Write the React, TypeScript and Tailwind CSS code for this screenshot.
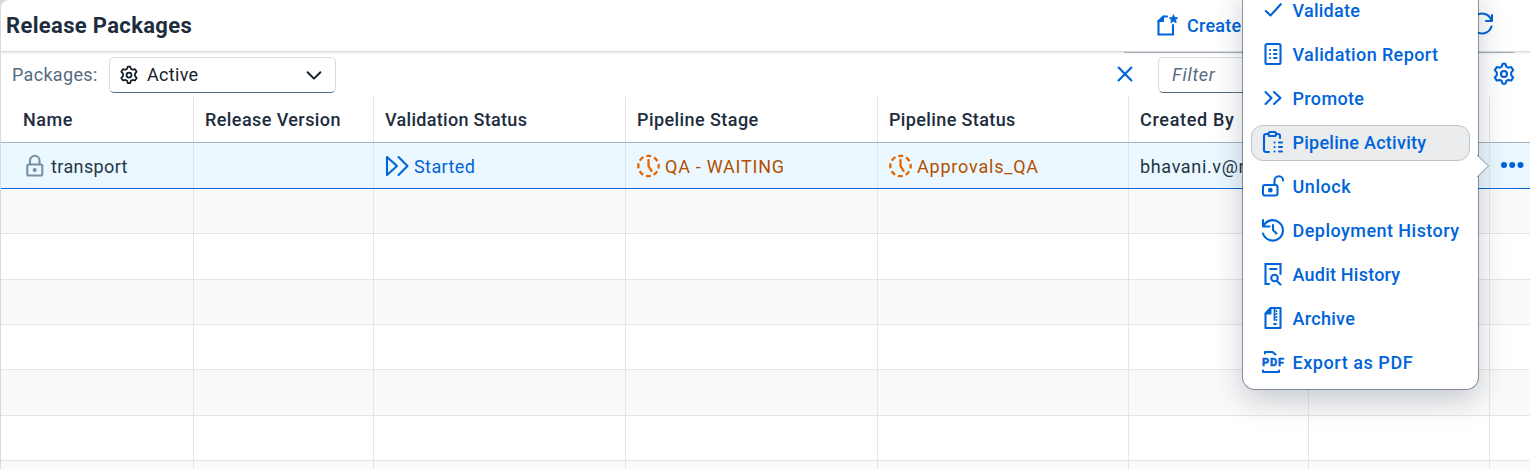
import type { ReactNode } from "react";

type IconProps = { className?: string; children?: ReactNode };

function Icon({ className = "", children }: IconProps) {
  return (
    <svg
      viewBox="0 0 24 24"
      width="24"
      height="24"
      fill="none"
      stroke="currentColor"
      strokeWidth="2.1"
      strokeLinecap="round"
      strokeLinejoin="round"
      className={`block shrink-0 ${className}`}
    >
      {children}
    </svg>
  );
}

const GEAR =
  "M10.6 1.800h2.800l.9 2.800 2 1.100 2.900-.7 2 3.100-2 2.300v2.800l2 2.300-2 3.100-2.900-.7-2 1.100-.9 2.800h-2.800l-.9-2.800-2-1.100-2.900.7-2-3.100 2-2.300v-2.800l-2-2.300 2-3.100 2.900.7 2-1.100z";

const GearIcon = ({ className = "" }: IconProps) => (
  <Icon className={className}>
    <path d={GEAR} />
    <circle cx="12" cy="12" r="3" />
  </Icon>
);

const WaitingIcon = () => (
  <Icon className="-ml-px text-[#e76500]">
    <circle
      cx="12.500"
      cy="12"
      r="10.200"
      strokeWidth="2.300"
      strokeDasharray="5 3.010"
      strokeDashoffset="2.500"
      strokeLinecap="butt"
    />
    <path d="M12.500 6v6l3 4.800" strokeWidth="2.300" />
  </Icon>
);

const menu: { label: string; tracking: string; active?: boolean; icon: ReactNode }[] = [
  {
    label: "Validate",
    tracking: "tracking-[0.25px]",
    icon: <Icon><path d="M4.800 13l4.700 4.500L19.800 6.200" /></Icon>,
  },
  {
    label: "Validation Report",
    tracking: "tracking-[0.38px]",
    icon: (
      <Icon>
        <rect x="4.500" y="2" width="15" height="20" rx="1.500" />
        <path d="M9 8h.1M9 12h.1M9 16h.1M13 8h2.500M13 12h2.500M13 16h2.500" />
      </Icon>
    ),
  },
  {
    label: "Promote",
    tracking: "tracking-[0.35px]",
    icon: <Icon><path d="M4.500 6l6 6-6 6M13 6l6.500 6-6.500 6" /></Icon>,
  },
  {
    label: "Pipeline Activity",
    tracking: "tracking-[0.26px]",
    active: true,
    icon: (
      <Icon>
        <path d="M7 4H5Q3 4 3 6v14Q3 22 5 22H8M16 4h1q2 0 2 2v2" />
        <rect x="7.500" y="2" width="7.500" height="4" rx="1.500" />
        <path d="M13.500 12.500h.1M13.500 17h.1M13.500 21.500h.1M18 12.500H21M18 17H21M18 21.500H21" />
      </Icon>
    ),
  },
  {
    label: "Unlock",
    tracking: "tracking-[0.55px]",
    icon: (
      <Icon>
        <rect x="2" y="11" width="14.500" height="10.500" rx="2" />
        <path d="M13.500 10.500V6.500a4.300 4.300 0 0 1 8.600 0" />
        <circle cx="9.300" cy="16.200" r="1.300" fill="currentColor" />
      </Icon>
    ),
  },
  {
    label: "Deployment History",
    tracking: "tracking-[0.46px]",
    icon: (
      <Icon>
        <path d="M2 2v6.500H8.500M2.500 8A10.200 10.200 0 1 1 2 15.500M12 7v5l3.500 3.500" />
      </Icon>
    ),
  },
  {
    label: "Audit History",
    tracking: "tracking-[0.22px]",
    icon: (
      <Icon>
        <path d="M8 22H4.500V2h15v10M9 7h6.500" strokeLinejoin="miter" />
        <circle cx="13.500" cy="16" r="3.300" />
        <path d="M16 19l3.500 3.500" />
      </Icon>
    ),
  },
  {
    label: "Archive",
    tracking: "tracking-[0.3px]",
    icon: (
      <Icon>
        <path d="M9.500 2h10v20H4.500V7.500z" />
        <path d="M10 2v6H4.500z" fill="currentColor" strokeWidth="1" />
        <path d="M13.500 3v11M15.500 5h.1M15.500 8h.1M15.500 11h.1M15.500 14h.1M13 18h2" strokeWidth="1.800" />
      </Icon>
    ),
  },
  {
    label: "Export as PDF",
    tracking: "tracking-[0.56px]",
    icon: (
      <Icon>
        <path d="M4 3.500V2h7.500l3 2.500M2 20.500V22h16v-1.500" />
        <text
          x="1"
          y="16.200"
          fill="currentColor"
          stroke="currentColor"
          strokeWidth="0.500"
          fontSize="11"
          fontWeight="700"
          textLength="22"
          fontFamily="Roboto, sans-serif"
        >
          PDF
        </text>
      </Icon>
    ),
  },
];

const HEADERS = [
  { label: "Name", cls: "pl-[22px] tracking-[0.5px]" },
  { label: "Release Version", cls: "pl-[11px] tracking-[0.42px]" },
  { label: "Validation Status", cls: "pl-[11px] tracking-[0.3px]" },
  { label: "Pipeline Stage", cls: "pl-[11px] tracking-[0.43px]" },
  { label: "Pipeline Status", cls: "pl-[11px] tracking-[0.38px]" },
  { label: "Created By", cls: "pl-[11px] tracking-[0.68px]" },
  { label: "", cls: "" },
  { label: "", cls: "" },
];

const COLS = "grid grid-cols-[193px_180px_252px_252px_251px_180px_181px_1fr]";
const CELL = "flex items-center overflow-hidden whitespace-nowrap border-r border-[#e5e5e5] last:border-r-0";

const EMPTY_ROWS = [
  "h-[45px] bg-[#fafafa]",
  "h-[46px] bg-white",
  "h-[45px] bg-[#fafafa]",
  "h-[45px] bg-white",
  "h-[46px] bg-[#fafafa]",
  "h-[45px] bg-white",
  "h-[45px] bg-[#fafafa]",
];

function Toolbar() {
  return (
    <header className="flex h-[52px] shrink-0 items-center border-b border-[#d9d9d9] pl-[5px] shadow-[0_1px_2px_rgba(34,53,72,0.12)]">
      <h1 className="w-[1149px] text-[22px] font-bold leading-none tracking-[0.34px] text-[#1d2d3e]">
        Release Packages
      </h1>
      <button className="-mt-px flex items-center gap-2 text-[18px] font-medium tracking-[0.25px] text-[#0064d9]">
        <Icon>
          <path d="M12 3.500H8.500L3.500 8v13.500h14.500V12" strokeLinejoin="miter" />
          <path d="M8.500 3v5.500H3z" fill="currentColor" strokeWidth="1" />
          <path
            d="M18.500 1.800l1.300 2.700 3 .3-2.200 2 .6 3-2.700-1.500-2.700 1.500.6-3-2.200-2 3-.3z"
            fill="currentColor"
            strokeWidth="0.800"
          />
        </Icon>
        Create
      </button>
      <Icon className="-mt-[3px] ml-auto mr-[36px] text-[#0064d9]">
        <path d="M22 3v6h-6M21.500 8.500A10 10 0 1 0 21.500 14.500" />
      </Icon>
    </header>
  );
}

function FilterBar() {
  return (
    <div className="flex h-[45px] shrink-0 items-start pt-[5px] pl-[11px] text-[18px]">
      <span className="mt-[4px] w-[97px] leading-[28px] tracking-[0.32px] text-[#556b82]">Packages:</span>
      <div className="flex h-[36px] w-[227px] items-center rounded-[5px] border border-[#d5dadd] border-b-[#556b82] pr-[10px] pl-[9px] text-[#131e29]">
        <GearIcon className="-mt-px size-[20px]" />
        <span className="-mt-[2px] ml-[8px] flex-1 tracking-[0.3px]">Active</span>
        <Icon className="size-[22px]"><path d="M5 9l7 7 7-7" /></Icon>
      </div>
      <Icon className="mt-[6px] ml-[778px] size-[22px] text-[#0064d9]">
        <path d="M5 5l14 14M19 5L5 19" strokeWidth="2.400" />
      </Icon>
      <div className="ml-[22px] flex h-[36px] w-[311px] items-center rounded-[5px] border border-[#d5dadd] border-b-[#556b82] pl-[13px] text-[#556b82] italic">
        <span className="-mt-[2px] tracking-[0.75px]">Filter</span>
      </div>
      <GearIcon className="mt-[5px] ml-[23px] size-[24px] text-[#0064d9]" />
    </div>
  );
}

function Table() {
  return (
    <section className="flex-1 text-[18px] text-[#223548]">
      <div className={`${COLS} h-[46px] border-b border-[#a8b3bd] font-medium text-[#1d2d3e]`}>
        {HEADERS.map((h, i) => (
          <div key={i} className={`${CELL} ${h.cls}`}>{h.label}</div>
        ))}
      </div>
      <div className={`${COLS} h-[46px] border-b border-[#0064d9] bg-[#ebf8ff]`}>
        <div className={`${CELL} pl-[22px]`}>
          <Icon className="text-[#788fa6]">
            <rect x="4.300" y="10.500" width="15" height="11" rx="1.500" />
            <path d="M7 10V6.500a4.750 4.750 0 0 1 9.500 0V10" />
            <circle cx="11.700" cy="16" r="1" fill="currentColor" />
          </Icon>
          <span className="mt-[2px] ml-[4px] tracking-[0.38px]">transport</span>
        </div>
        <div className={CELL} />
        <div className={`${CELL} pl-[11px] text-[#0064d9]`}>
          <Icon><path d="M2 3v18l10-9zM13.500 3l9 9-9 9" /></Icon>
          <span className="mt-[2px] ml-[5px] tracking-[0.4px]">Started</span>
        </div>
        <div className={`${CELL} pl-[11px] text-[#b44f00]`}>
          <WaitingIcon />
          <span className="mt-[2px] ml-[5px] tracking-[0.75px]">QA - WAITING</span>
        </div>
        <div className={`${CELL} pl-[11px] text-[#b44f00]`}>
          <WaitingIcon />
          <span className="mt-[2px] ml-[5px] tracking-[0.8px]">Approvals_QA</span>
        </div>
        <div className={`${CELL} pl-[11px]`}>
          <span className="mt-[2px] tracking-[0.65px]">bhavani.v@nexus</span>
        </div>
        <div className={CELL} />
        <div className={`${CELL} pl-[10px] text-[#0064d9]`}>
          <svg className="-mt-px" width="24" height="8" viewBox="0 0 24 8" fill="currentColor">
            <circle cx="4" cy="4" r="3" />
            <circle cx="12.200" cy="4" r="3" />
            <circle cx="20.500" cy="4" r="3" />
          </svg>
        </div>
      </div>
      {EMPTY_ROWS.map((cls, i) => (
        <div key={i} className={`${COLS} ${cls} border-b border-[#e5e5e5]`}>
          {HEADERS.map((_, j) => (
            <div key={j} className={CELL} />
          ))}
        </div>
      ))}
    </section>
  );
}

function ActionMenu() {
  return (
    <div className="absolute top-[-15px] left-[1243px] w-[235px] rounded-[12px] bg-white shadow-[0_0_0_1px_rgba(34,53,72,0.48),0_10px_30px_0_rgba(34,53,72,0.25)]">
      <svg className="absolute top-[169px] left-[234px]" width="14" height="24" viewBox="0 0 14 24">
        <path d="M0 1L11.500 12L0 23" fill="white" stroke="#8592a0" />
      </svg>
      <ul className="relative flex h-[404px] flex-col gap-[8px] p-[8px] text-[18px] font-medium text-[#0064d9]">
        {menu.map((m) => (
          <li
            key={m.label}
            className={`flex h-[36px] shrink-0 items-center gap-[7.5px] rounded-[12px] border pb-[2px] pl-[9px] whitespace-nowrap ${
              m.active ? "w-[219px] border-[#bcc3ca] bg-[#eaecee]" : "border-transparent"
            }`}
          >
            {m.icon}
            <span className={m.tracking}>{m.label}</span>
          </li>
        ))}
      </ul>
    </div>
  );
}

export default function App() {
  return (
    <div className="relative h-[469px] w-[1530px] overflow-hidden bg-[#d5dadd] font-[Roboto,sans-serif]">
      <main className="ml-px flex h-[469px] flex-col overflow-hidden rounded-tl-[8px] bg-white">
        <Toolbar />
        <FilterBar />
        <Table />
      </main>
      <div className="absolute top-[52px] left-[1124px] h-px w-[390px] bg-[#a3b1bf]" />
      <ActionMenu />
    </div>
  );
}
